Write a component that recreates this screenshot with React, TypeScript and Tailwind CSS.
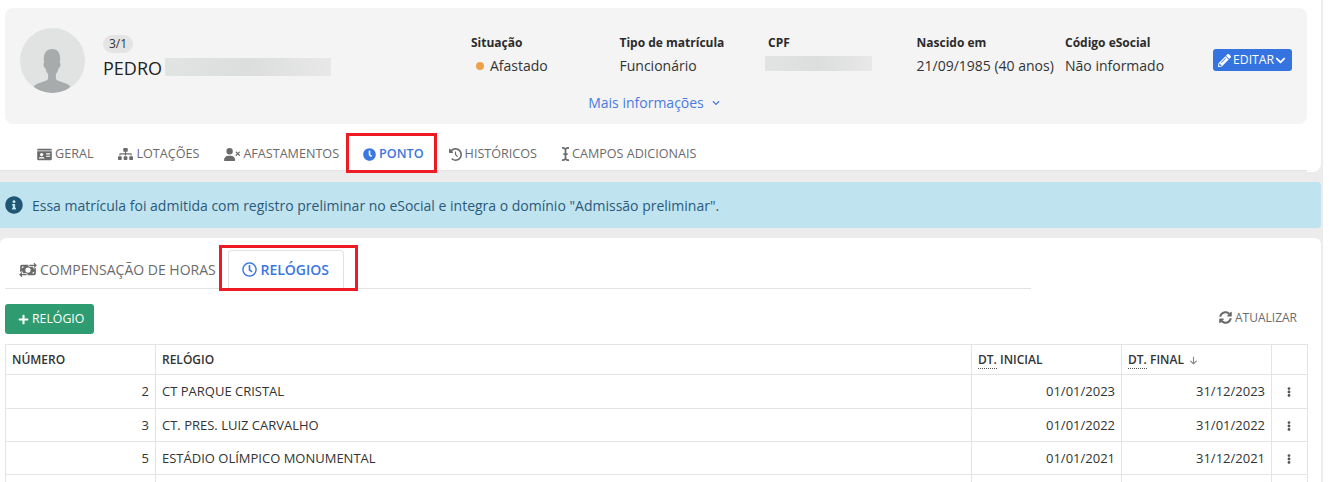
import React from "react";
import { FaIdCard, FaSitemap, FaClock, FaICursor, FaPencilAlt, FaChevronDown, FaPlus, FaRegClock, FaInfoCircle, FaEllipsisV, FaSyncAlt } from "react-icons/fa";
import { FaUserXmark, FaClockRotateLeft, FaMoneyBillTransfer, FaArrowDown } from "react-icons/fa6";

const font = { fontFamily: '"Open Sans", sans-serif' };

function Info({ label, children }: { label: string; children: React.ReactNode }) {
  return (
    <div className="w-[148.5px] shrink-0">
      <div className="text-[12px] leading-[16px] font-bold text-[#2b2b2b]">{label}</div>
      <div className="mt-[5px] text-[14px] leading-[20px] text-[#333]">{children}</div>
    </div>
  );
}

function Redact({ className }: { className: string }) {
  return <div className={"bg-gradient-to-r from-[#e2e3e3] via-[#dcdddd] to-[#e8e8e8] " + className} />;
}

function Tab({ icon, label, active }: { icon: React.ReactNode; label: string; active?: boolean }) {
  return (
    <div className={"relative flex items-center gap-[3px] text-[12.6px] leading-[16px] " + (active ? "font-semibold text-[#3b76e1]" : "text-[#6b6b6b]")}>
      {icon}
      <span>{label}</span>
      {active && <div className="absolute left-[-17px] top-[-13px] w-[91px] h-[40px] border-[3px] border-[#ed1c24]" />}
    </div>
  );
}

const rows = [
  ["2", "CT PARQUE CRISTAL", "01/01/2023", "31/12/2023", "h-[34px]"],
  ["3", "CT. PRES. LUIZ CARVALHO", "01/01/2022", "31/01/2022", "h-[33px] [&>td]:pt-[1px]"],
  ["5", "ESTÁDIO OLÍMPICO MONUMENTAL", "01/01/2021", "31/12/2021", "h-[33px] [&>td]:pt-[1px]"],
  ["", "", "", "", "h-[33px]"],
];

export default function App() {
  return (
    <div style={font} className="h-[482px] w-[1329px] overflow-hidden bg-white">
      <div className="w-[1323px] h-[482px] bg-[#ececec]">
        <div className="w-[1321px] h-[172px] bg-white rounded-br-[8px] pt-[8px] pl-[5px]">
          <div className="w-[1302px] h-[116px] rounded-[8px] bg-[#f4f4f4] flex pl-[15px] pt-[20px]">
            <div className="w-[65px] h-[65px] rounded-full bg-[#e1e2e2] overflow-hidden shrink-0">
              <svg viewBox="0 0 65 65" className="w-[65px] h-[65px]">
                <path fill="#a7abab" d="M32.500 21c-6 0-8.700 4.200-8.700 9.500 0 1.800.2 3 .5 4.200-.9.300-1 1.700-.6 3.100.4 1.400 1 2.300 1.700 2.400.5 2.500 1.500 4.500 2.700 5.900v4.400c0 1.200-1.600 2.100-5.200 3.300-3.700 1.200-7.500 2.500-9.400 4.700 4.700 4.800 11.600 6.500 19 6.500s13.600-2 18-6.500c-1.900-2.200-5.700-3.500-9.400-4.700-3.600-1.200-5.200-2.100-5.200-3.300v-4.400c1.200-1.400 2.200-3.400 2.700-5.900.7-.1 1.300-1 1.700-2.400.4-1.400.3-2.800-.6-3.100.3-1.200.5-2.400.5-4.200 0-5.300-2.600-9.500-7.700-9.500z" />
              </svg>
            </div>
            <div className="w-[386px] shrink-0 pl-[18px] pt-[7px]">
              <div className="w-[30px] h-[18px] rounded-full bg-[#e4e4e4] text-[12px] leading-[18px] text-center text-[#333]">3/1</div>
              <div className="flex items-center mt-[5px] h-[18px]">
                <span className="text-[18px] leading-[18px] text-[#222] relative top-[1px]">PEDRO</span>
                <Redact className="ml-[3px] w-[166px] h-[18px]" />
              </div>
            </div>
            <div className="flex flex-col">
              <div className="flex pt-[7px]">
                <Info label="Situação">
                  <span className="flex items-center pl-[5px]">
                    <span className="w-[8px] h-[8px] rounded-full bg-[#eda14b] mr-[6px]" />Afastado
                  </span>
                </Info>
                <Info label="Tipo de matrícula">Funcionário</Info>
                <Info label="CPF"><Redact className="-ml-[3px] w-[107px] h-[15px] mt-[5px]" /></Info>
                <Info label="Nascido em">21/09/1985 (40 anos)</Info>
                <Info label="Código eSocial">Não informado</Info>
              </div>
              <div className="w-[352px] ml-[7px] mt-[17px] flex items-center justify-center gap-[8px] text-[14px] leading-[20px] text-[#4a7ae0]">
                Mais informações <FaChevronDown className="w-[8px] h-[8px]" />
              </div>
            </div>
            <div className="ml-[-1px] mt-[21px] w-[79px] h-[22px] rounded-[3px] bg-[#3574e0] text-white text-[12.2px] flex items-center justify-center gap-[1px]">
              <FaPencilAlt className="w-[13px] h-[13px] mr-[1px]" />EDITAR<FaChevronDown className="w-[11px] h-[11px]" />
            </div>
          </div>
          <div className="-ml-[5px] w-[1307px] h-[47px] border-b border-b-[#e2e2e2] flex items-center gap-[25px] pl-[37px] pt-[14px]">
            <Tab icon={<FaIdCard className="w-[15px] h-[13px]" />} label="GERAL" />
            <Tab icon={<FaSitemap className="w-[15px] h-[12px]" />} label="LOTAÇÕES" />
            <Tab icon={<FaUserXmark className="w-[16px] h-[13px]" />} label="AFASTAMENTOS" />
            <div className="-ml-[1px]"><Tab active icon={<FaClock className="w-[13px] h-[13px]" />} label="PONTO" /></div>
            <Tab icon={<FaClockRotateLeft className="w-[13px] h-[13px]" />} label="HISTÓRICOS" />
            <Tab icon={<FaICursor className="w-[7px] h-[14px]" />} label="CAMPOS ADICIONAIS" />
          </div>
          <div className="-ml-[5px] w-[1307px] h-[1px] bg-[#ececec]" />
        </div>

        <div className="mt-[10px] w-[1321px] h-[46px] rounded-r-[4px] bg-[#c0e3f0] flex items-center pl-[5px] text-[14px] text-[#2a5a78]">
          <FaInfoCircle className="w-[18px] h-[18px] text-[#1f5673] mr-[9px]" />
          Essa matrícula foi admitida com registro preliminar no eSocial e integra o domínio "Admissão preliminar".
        </div>

        <div className="mt-[10px] w-[1321px] h-[244px] bg-white rounded-t-[6px] pl-[5px] pt-[11px]">
          <div className="w-[1026px] h-[40px] border-b border-b-[#e2e2e2] flex items-end">
            <div className="h-[37px] flex items-center pl-[14px] pr-[12px] text-[14px] text-[#6b6b6b] gap-[3px]">
              <FaMoneyBillTransfer className="w-[18px] h-[14px]" />COMPENSAÇÃO DE HORAS
            </div>
            <div className="relative h-[39px] w-[116px] -mb-[1px] bg-white rounded-t-[4px] border border-[#e2e2e2] border-b-white flex items-center justify-center gap-[3px] text-[14px] font-semibold text-[#3b76e1]">
              <FaRegClock className="w-[15px] h-[15px]" />RELÓGIOS
              <div className="absolute left-[-10px] top-[-6px] w-[139px] h-[46px] border-[3px] border-[#ed1c24]" />
            </div>
          </div>

          <div className="flex items-center justify-between pt-[15px] pr-[24px]">
            <div className="w-[89px] h-[30px] rounded-[3px] bg-[#2f9b70] text-white text-[12.3px] flex items-center pl-[13px] gap-[3px]">
              <FaPlus className="w-[11px] h-[11px]" />RELÓGIO
            </div>
            <div className="flex items-center gap-[3px] text-[12px] text-[#6b6b6b] -mt-[3px]">
              <FaSyncAlt className="w-[13px] h-[13px]" />ATUALIZAR
            </div>
          </div>

          <table className="mt-[10px] w-[1302px] table-fixed border-collapse text-[13px] text-[#333]">
            <colgroup>
              <col className="w-[150px]" /><col className="w-[816px]" /><col className="w-[150px]" /><col className="w-[150px]" /><col className="w-[36px]" />
            </colgroup>
            <thead>
              <tr className="h-[30px] text-[12px]">
                <th className="border border-[#e4e4e4] text-left px-[6px] font-semibold">NÚMERO</th>
                <th className="border border-[#e4e4e4] text-left px-[6px] font-semibold">RELÓGIO</th>
                <th className="border border-[#e4e4e4] text-left px-[6px] font-semibold"><span className="border-b border-dotted border-[#555]">DT.</span> INICIAL</th>
                <th className="border border-[#e4e4e4] text-left px-[6px] font-semibold">
                  <span className="border-b border-dotted border-[#555]">DT.</span> FINAL <FaArrowDown className="inline w-[9px] h-[9px] ml-[2px] text-[#888]" />
                </th>
                <th className="border border-[#e4e4e4]" />
              </tr>
            </thead>
            <tbody>
              {rows.map((r, i) => (
                <tr key={i} className={r[4]}>
                  <td className="border border-[#e4e4e4] text-right px-[6px]">{r[0]}</td>
                  <td className="border border-[#e4e4e4] px-[6px]">{r[1]}</td>
                  <td className="border border-[#e4e4e4] text-right px-[6px]">{r[2]}</td>
                  <td className="border border-[#e4e4e4] text-right px-[6px]">{r[3]}</td>
                  <td className="border border-[#e4e4e4] text-center pr-[1px]">
                    {r[0] && <FaEllipsisV className="inline w-[6px] h-[10px] text-[#555]" />}
                  </td>
                </tr>
              ))}
            </tbody>
          </table>
        </div>
      </div>
    </div>
  );
}
